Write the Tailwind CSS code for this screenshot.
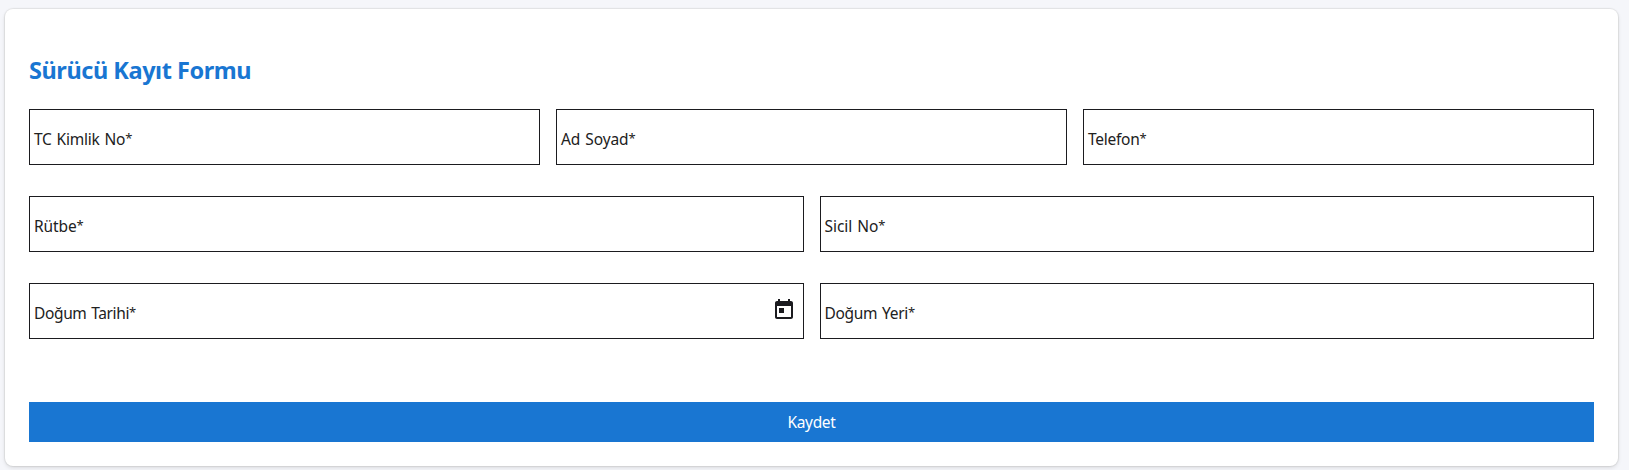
<!DOCTYPE html>
<html lang="tr">
<head>
<meta charset="utf-8">
<title>Sürücü Kayıt Formu</title>
<script src="https://cdn.jsdelivr.net/npm/@tailwindcss/browser@4"></script>
</head>
<body class="h-[470px] overflow-hidden bg-[#f5f6fa] pt-[9px] pl-[5px] font-['Segoe_UI','Noto_Sans',sans-serif] text-[15.5px] text-[#212121]">
<form class="flex h-[457px] w-[1613px] flex-col rounded-lg bg-white px-6 pt-[45px] shadow-[0_2px_4px_rgba(0,0,0,0.1),0_0_1px_1px_rgba(40,40,0,0.08)]">
  <h2 class="mb-[23px] h-8 text-[23.5px] leading-8 font-bold tracking-[-0.45px] whitespace-nowrap text-[#1976d2]"><span>Sürücü Kayıt Formu</span></h2>
  <div class="grid grid-cols-3 gap-4">
    <label class="flex h-14 items-center border border-[#1b1b1f] pt-1.5 pl-1"><span class="tracking-[-0.2px] [word-spacing:1px]">TC Kimlik No<span class="align-[2px] text-[13px] leading-none">*</span></span></label>
    <label class="flex h-14 items-center border border-[#1b1b1f] pt-1.5 pl-1"><span class="tracking-[-0.08px] [word-spacing:1px]">Ad Soyad<span class="align-[2px] text-[13px] leading-none">*</span></span></label>
    <label class="flex h-14 items-center border border-[#1b1b1f] pt-1.5 pl-1"><span class="tracking-[-0.25px]">Telefon<span class="align-[2px] text-[13px] leading-none">*</span></span></label>
  </div>
  <div class="mt-[31px] grid grid-cols-2 gap-x-4 gap-y-[31px]">
    <label class="flex h-14 items-center border border-[#1b1b1f] pt-1.5 pl-1"><span class="tracking-[-0.1px]">Rütbe<span class="align-[2px] text-[13px] leading-none">*</span></span></label>
    <label class="flex h-14 items-center border border-[#1b1b1f] pt-1.5 pl-1"><span class="tracking-[-0.05px] [word-spacing:1px]">Sicil No<span class="align-[2px] text-[13px] leading-none">*</span></span></label>
    <label class="flex h-14 items-center justify-between border border-[#1b1b1f] pr-[7px] pl-1"><span class="pt-1.5 tracking-[-0.36px] [word-spacing:1px]">Doğum Tarihi<span class="align-[2px] text-[13px] leading-none">*</span></span>
      <svg class="-mt-0.5 size-6" viewBox="0 0 24 24" fill="#1b1b1f"><path d="M19 3h-1V1h-2v2H8V1H6v2H5c-1.11 0-1.99.9-1.99 2L3 19c0 1.1.89 2 2 2h14c1.1 0 2-.9 2-2V5c0-1.1-.9-2-2-2zm0 16H5V8h14v11zM7 10h5v5H7z"/></svg>
    </label>
    <label class="flex h-14 items-center border border-[#1b1b1f] pt-1.5 pl-1"><span class="tracking-[-0.3px] [word-spacing:1px]">Doğum Yeri<span class="align-[2px] text-[13px] leading-none">*</span></span></label>
  </div>
  <button type="button" class="mt-[63px] h-10 w-full bg-[#1976d2] pt-px text-white"><span class="tracking-[-0.35px]">Kaydet</span></button>
</form>
</body>
</html>
